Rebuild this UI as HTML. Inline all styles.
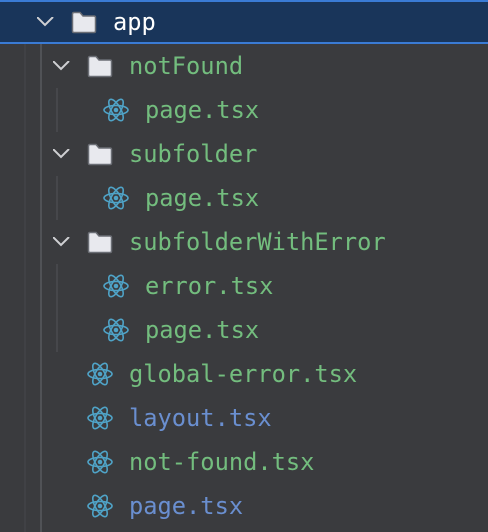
<!DOCTYPE html>
<html><head><style>
body{margin:0;width:488px;height:532px;background:#3a3b3e;position:relative;overflow:hidden;font-family:"DejaVu Sans Mono","Liberation Mono",monospace;font-size:23.7px;}
.hdr{position:absolute;left:0;top:0;width:488px;height:40px;background:#19355a;border-top:2px solid #3a7bd5;border-bottom:2px solid #3a7bd5;}
.row{position:absolute;height:44px;line-height:44px;white-space:nowrap;}
.g{color:#73bd7e}.b{color:#6a8fd0}.w{color:#fff}
.v{position:absolute;width:2px;}
svg{position:absolute}
</style></head><body>
<div class="hdr"></div>
<div class="v" style="left:24px;top:44px;height:488px;background:#404145"></div>
<div class="v" style="left:40px;top:44px;height:488px;background:#505256"></div>
<div class="v" style="left:56px;top:88px;height:44px;background:#46474b"></div>
<div class="v" style="left:56px;top:176px;height:44px;background:#46474b"></div>
<div class="v" style="left:56px;top:264px;height:88px;background:#46474b"></div>

<svg width="0" height="0"><defs>
<g id="chev"><path d="M0 0 L8 8 L16 0" fill="none" stroke="#cfd0d3" stroke-width="2"/></g>
<g id="fold"><path d="M1.5 3 Q1.5 1.5 3 1.5 L9 1.5 L12 5 L23 5 Q24.5 5 24.5 6.5 L24.5 20 Q24.5 21.5 23 21.5 L3 21.5 Q1.5 21.5 1.5 20 Z" fill="#e8e9ee" stroke="#6b6e75" stroke-width="1.5"/></g>
<g id="re" fill="none" stroke="#4fa3c7" stroke-width="1.6"><ellipse cx="13" cy="13" rx="12" ry="4.6"/><ellipse cx="13" cy="13" rx="12" ry="4.6" transform="rotate(60 13 13)"/><ellipse cx="13" cy="13" rx="12" ry="4.6" transform="rotate(-60 13 13)"/><circle cx="13" cy="13" r="2.3" fill="#4fa3c7" stroke="none"/></g>
</defs></svg>

<svg style="left:37px;top:17px" width="18" height="10"><use href="#chev"/></svg>
<svg style="left:71px;top:11px" width="27" height="24"><use href="#fold"/></svg>
<div class="row w" style="left:113px;top:0">app</div>

<svg style="left:53px;top:61px" width="18" height="10"><use href="#chev"/></svg>
<svg style="left:87px;top:55px" width="27" height="24"><use href="#fold"/></svg>
<div class="row g" style="left:129px;top:44px">notFound</div>
<svg style="left:103px;top:97px" width="26" height="26"><use href="#re"/></svg>
<div class="row g" style="left:145px;top:88px">page.tsx</div>

<svg style="left:53px;top:149px" width="18" height="10"><use href="#chev"/></svg>
<svg style="left:87px;top:143px" width="27" height="24"><use href="#fold"/></svg>
<div class="row g" style="left:129px;top:132px">subfolder</div>
<svg style="left:103px;top:185px" width="26" height="26"><use href="#re"/></svg>
<div class="row g" style="left:145px;top:176px">page.tsx</div>

<svg style="left:53px;top:237px" width="18" height="10"><use href="#chev"/></svg>
<svg style="left:87px;top:231px" width="27" height="24"><use href="#fold"/></svg>
<div class="row g" style="left:129px;top:220px">subfolderWithError</div>
<svg style="left:103px;top:273px" width="26" height="26"><use href="#re"/></svg>
<div class="row g" style="left:145px;top:264px">error.tsx</div>
<svg style="left:103px;top:317px" width="26" height="26"><use href="#re"/></svg>
<div class="row g" style="left:145px;top:308px">page.tsx</div>

<svg style="left:87px;top:361px" width="26" height="26"><use href="#re"/></svg>
<div class="row g" style="left:129px;top:352px">global-error.tsx</div>
<svg style="left:87px;top:405px" width="26" height="26"><use href="#re"/></svg>
<div class="row b" style="left:129px;top:396px">layout.tsx</div>
<svg style="left:87px;top:449px" width="26" height="26"><use href="#re"/></svg>
<div class="row g" style="left:129px;top:440px">not-found.tsx</div>
<svg style="left:87px;top:493px" width="26" height="26"><use href="#re"/></svg>
<div class="row b" style="left:129px;top:484px">page.tsx</div>
</body></html>
